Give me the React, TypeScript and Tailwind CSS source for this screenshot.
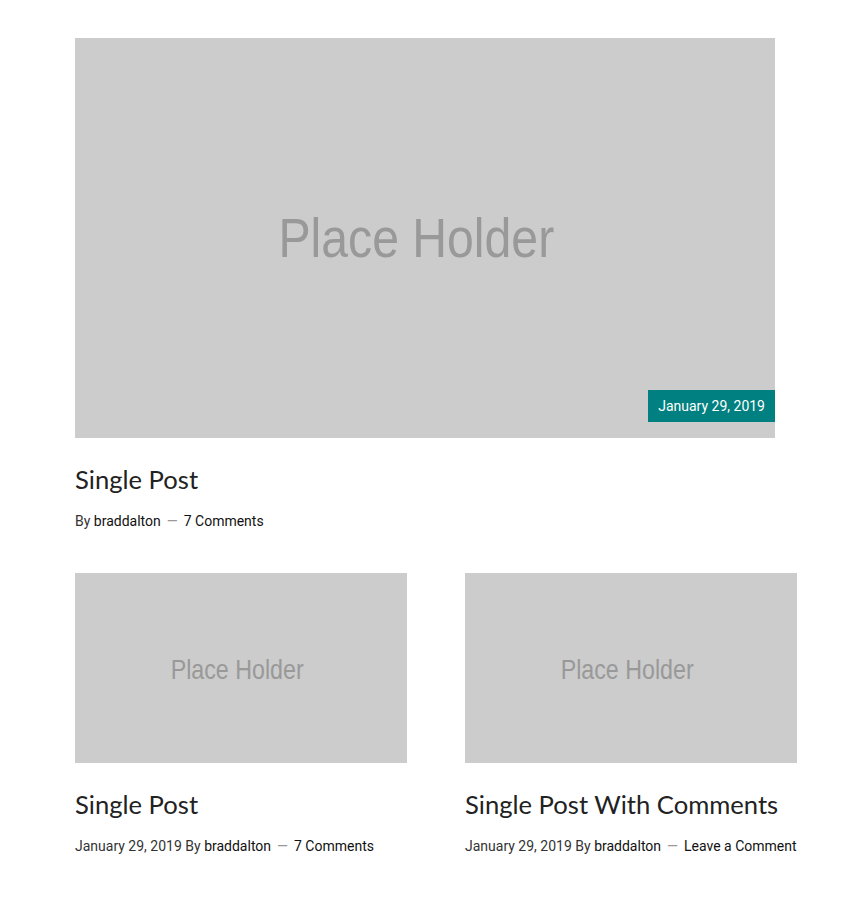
export default function App() {
  return (
    <div className="min-h-screen bg-white font-['Roboto',sans-serif] text-[#333]">
      <div className="pl-[75px] pt-[38px]">
        <article className="w-[700px]">
          <div className="relative flex h-[400px] items-center justify-center bg-[#cccccc] pr-[18px]">
            <span className="inline-block scale-x-[0.86] font-['Liberation_Sans',sans-serif] text-[56px] text-[#999999]">
              Place Holder
            </span>
            <span className="absolute bottom-[16px] right-0 flex h-[32px] items-center bg-[#008080] px-[10px] text-[14px] text-white">
              January 29, 2019
            </span>
          </div>
          <h2 className="mt-[26px] font-['Lato',sans-serif] text-[25.6px] leading-[30px] text-[#222]">Single Post</h2>
          <Meta />
        </article>

        <div className="mt-[43px] grid w-[722px] grid-cols-[332px_332px] gap-x-[58px]">
          <Card title="Single Post" comments="7 Comments" />
          <Card title="Single Post With Comments" comments="Leave a Comment" />
        </div>
      </div>
    </div>
  );
}

function Meta({ date, comments = "7 Comments" }: { date?: string; comments?: string }) {
  return (
    <p className="mt-[18px] text-[14px] leading-[18px] text-[#333]">
      {date && <span>{date} </span>}
      By <span className="text-[#111]">braddalton</span>
      <span className="mx-[6px] text-[#999]">—</span>
      <span className="text-[#111]">{comments}</span>
    </p>
  );
}

function Card({ title, comments }: { title: string; comments: string }) {
  return (
    <article className="whitespace-nowrap">
      <div className="flex h-[190px] items-center justify-center bg-[#cccccc] pr-[8px] pt-[4px]">
        <span className="inline-block scale-x-[0.83] font-['Liberation_Sans',sans-serif] text-[28px] text-[#999999]">
          Place Holder
        </span>
      </div>
      <h2 className="mt-[26px] font-['Lato',sans-serif] text-[25.6px] leading-[30px] text-[#222]">{title}</h2>
      <Meta date="January 29, 2019" comments={comments} />
    </article>
  );
}
